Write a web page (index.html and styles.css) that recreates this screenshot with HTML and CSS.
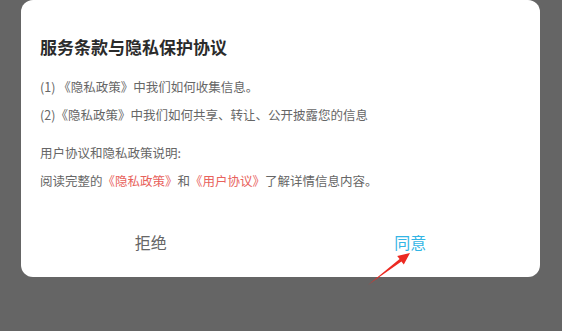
FILE: index.html
```html
<!DOCTYPE html>
<html lang="zh-CN">
<head>
<meta charset="utf-8">
<link rel="stylesheet" href="styles.css">
</head>
<body>
<div class="screen">
  <div class="dialog">
    <div class="content">
      <h1 class="title">服务条款与隐私保护协议</h1>
      <div class="group">
        <p class="line">(1) 《隐私政策》中我们如何收集信息。</p>
        <p class="line">(2)《隐私政策》中我们如何共享、转让、公开披露您的信息</p>
      </div>
      <div class="group second">
        <p class="line">用户协议和隐私政策说明:</p>
        <p class="line">阅读完整的<span class="link">《隐私政策》</span>和<span class="link">《用户协议》</span>了解详情信息内容。</p>
      </div>
    </div>
    <div class="actions">
      <div class="btn reject">拒绝</div>
      <div class="btn agree">同意</div>
    </div>
  </div>
  <svg class="arrow" width="562" height="331" viewBox="0 0 562 331">
    <polygon points="368,285 399.6,259.1 397.2,256 410,253 403.8,264.6 401.4,261.5" fill="#ec2a22"/>
  </svg>
</div>
</body>
</html>
```

FILE: styles.css
```css
html, body {
  margin: 0;
  padding: 0;
  background: #656565;
}
.screen {
  position: relative;
  width: 562px;
  height: 331px;
  overflow: hidden;
  font-family: "Noto Sans CJK SC", "Noto Sans", sans-serif;
}
.dialog {
  margin: 0 22px 0 21px;
  height: 277px;
  background: #ffffff;
  border-radius: 12px;
  display: flex;
  flex-direction: column;
}
.content {
  padding: 35px 19px 0 19px;
}
.title {
  margin: 0;
  font-size: 17px;
  line-height: 24px;
  font-weight: 700;
  color: #2b2b2b;
}
.group {
  margin-top: 14px;
}
.group.second {
  margin-top: 10px;
}
.line {
  margin: 0;
  font-size: 12.5px;
  line-height: 28px;
  color: #666666;
  white-space: nowrap;
}
.link {
  color: #e8625c;
}
.actions {
  margin-top: 22px;
  display: flex;
  height: 50px;
}
.btn {
  flex: 1;
  display: flex;
  align-items: center;
  justify-content: center;
  font-size: 16px;
}
.reject {
  color: #666666;
}
.agree {
  color: #33b5e5;
}
.arrow {
  position: absolute;
  left: 0;
  top: 0;
  pointer-events: none;
}
```
